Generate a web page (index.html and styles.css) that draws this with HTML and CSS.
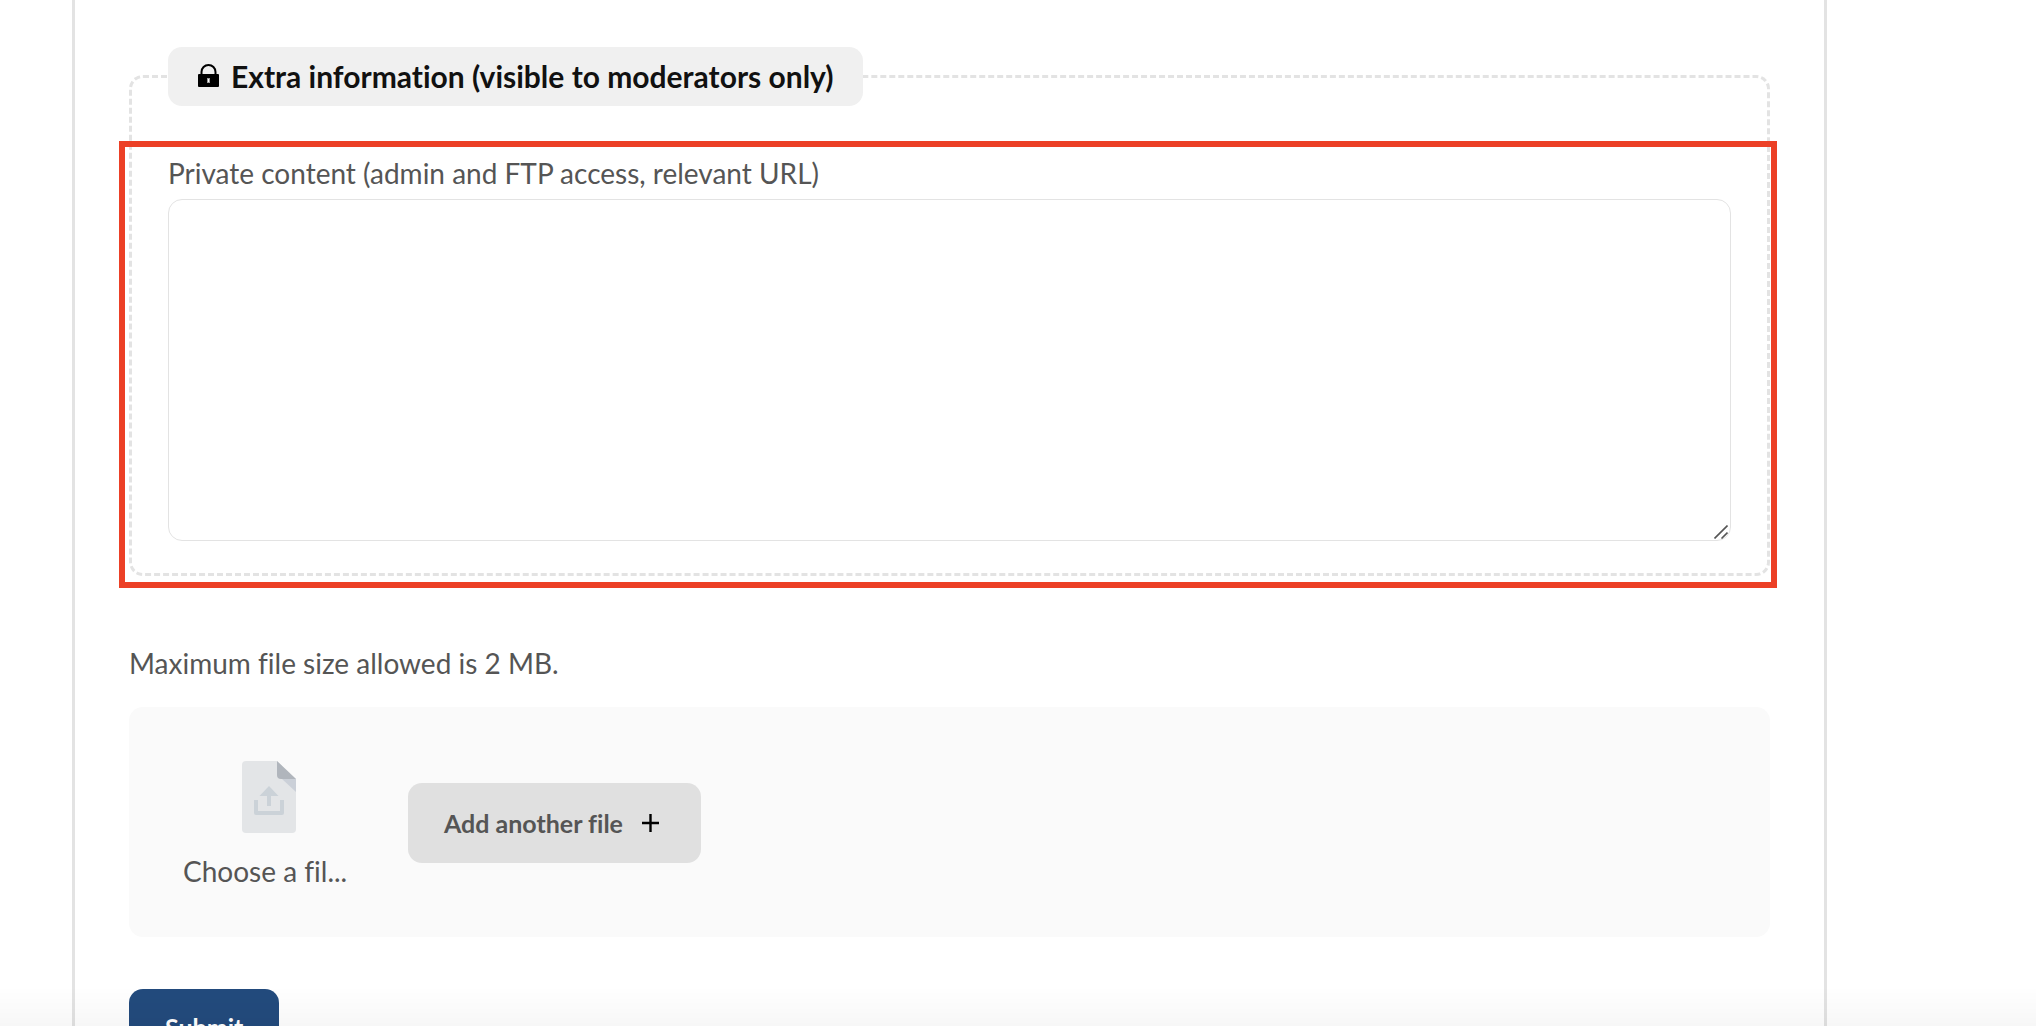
FILE: index.html
```html
<!DOCTYPE html>
<html lang="en">
<head>
  <meta charset="UTF-8">
  <meta name="viewport" content="width=device-width, initial-scale=1.0">
  <title>Support ticket</title>
  <link rel="stylesheet" href="styles.css">
</head>
<body>
  <form class="ticket-form">
    <fieldset class="private">
      <legend class="private-title">
        <svg class="lock" viewBox="0 0 21 24" aria-hidden="true">
          <path d="M3.5 11V8a7 7 0 0 1 14 0v3" fill="none" stroke="#000" stroke-width="2"/>
          <rect y="10" width="21" height="13" rx="1"/>
          <rect x="9" y="14" width="3" height="5" fill="#999"/>
          <rect x="10" y="15" width="1" height="3" fill="#fff"/>
        </svg>
        Extra information (visible to moderators only)
      </legend>
      <div class="private-field">
        <label for="private-content">Private content (admin and FTP access, relevant URL)</label>
        <textarea id="private-content"></textarea>
        <svg class="grip" viewBox="0 0 14 14" aria-hidden="true">
          <path d="M0.5 13.5l13-13M7.5 13.5l6-6" stroke="#555" stroke-width="1.6"/>
        </svg>
      </div>
    </fieldset>

    <p class="size-note">Maximum file size allowed is 2 MB.</p>

    <div class="upload">
      <input type="file" id="attachment" class="file-input">
      <label for="attachment" class="file-label">
        <svg class="file-icon" viewBox="0 0 54 72" aria-hidden="true">
          <path d="M4 0h31l19 18v50a4 4 0 0 1-4 4H4a4 4 0 0 1-4-4V4a4 4 0 0 1 4-4z" fill="#e3e5e7"/>
          <path d="M40 18h14v13z" fill="#cbd0d8"/>
          <path d="M35 0l19 18H39a4 4 0 0 1-4-4z" fill="#b0b5bc"/>
          <path d="M27 25l9.500 10h-19z" fill="#cbd2d8"/>
          <path d="M27 34v11" stroke="#cbd2d8" stroke-width="4"/>
          <path d="M14 39v13h26V39" fill="none" stroke="#cbd2d8" stroke-width="4" stroke-linejoin="round"/>
        </svg>
        <span>Choose a fil...</span>
      </label>
      <button type="button" class="btn btn-add">
        Add another file
        <svg class="plus" viewBox="0 0 18 18" aria-hidden="true">
          <path d="M0 9h17M8.500 0v18" stroke="#000" stroke-width="2.4"/>
        </svg>
      </button>
    </div>

    <button type="submit" class="btn btn-submit">Submit</button>
  </form>
  <div class="bottom-fade"></div>
</body>
</html>
```
FILE: styles.css
```css
* { box-sizing: border-box; }
body { margin: 0; height: 100vh; overflow: hidden; background: #fff; color: #555; font-family: Lato, sans-serif; font-size: 28px; line-height: 42px; font-variant-ligatures: none; }

.ticket-form { min-height: 100vh; margin: 0 209px 0 72px; padding: 47px 54px 60px; border: solid #e3e3e3; border-width: 0 3px; }

.private { margin: 0; padding: 46px 36px 32px; border: 3px dashed #e3e3e3; border-radius: 14px; }
.private-title { display: flex; align-items: center; gap: 12px; height: 59px; padding: 0 29px 2px 30px; border-radius: 14px; background: #f0f0f0; color: #111; font-size: 30px; font-weight: bold; white-space: nowrap; }
.lock { width: 21px; height: 24px; }
.private-field { position: relative; }
.private-field label { display: block; margin-bottom: 5px; }
.private-field textarea { display: block; width: 100%; height: 342px; padding: 14px; border: 1px solid #e3e3e3; border-radius: 14px; background: #fff; font: inherit; color: inherit; resize: vertical; }
.private-field textarea::-webkit-resizer { display: none; }
.grip { position: absolute; right: 3px; bottom: 2px; width: 14px; height: 14px; pointer-events: none; }

/* highlight around the private field */
.private-field::after { content: ""; position: absolute; top: -11px; right: -46px; bottom: -47px; left: -49px; border: 6px solid #ec4026; pointer-events: none; }

.size-note { margin: 66px 0 23px; }

.upload { display: flex; align-items: flex-start; gap: 53px; padding: 54px 54px 45px; border-radius: 14px; background: #fafafa; }
.file-input { position: absolute; width: 1px; height: 1px; opacity: 0; }
.file-label { display: flex; flex-direction: column; gap: 17px; width: 172px; white-space: nowrap; cursor: pointer; }
.file-icon { align-self: center; width: 54px; height: 72px; }

.btn { display: inline-flex; align-items: center; height: 80px; padding: 0 36px; border: 0; border-radius: 14px; font: inherit; font-size: 25px; font-weight: bold; cursor: pointer; }
.btn-add { gap: 19px; margin-top: 22px; padding-right: 41px; background: #e0e0e0; color: #555; }
.plus { width: 18px; height: 18px; }
.btn-submit { height: 76px; margin-top: 52px; background: #234b7d; color: #fff; }

.bottom-fade { position: fixed; right: 0; bottom: 0; left: 0; height: 40px; background: linear-gradient(transparent, rgba(0, 0, 0, 0.03)); pointer-events: none; }
```
